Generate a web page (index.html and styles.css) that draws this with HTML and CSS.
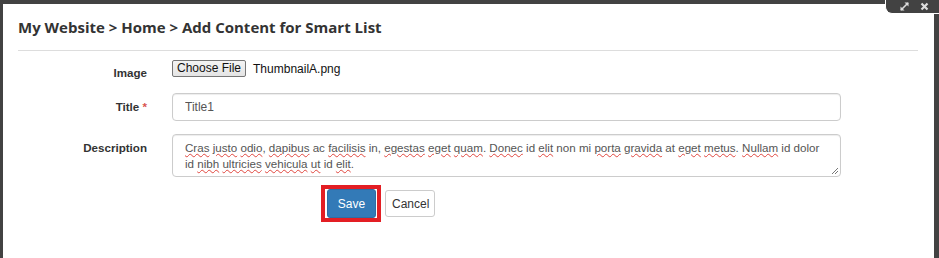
FILE: index.html
```html
<!DOCTYPE html>
<html lang="en">

<head>
  <meta charset="UTF-8">
  <meta name="viewport" content="width=device-width, initial-scale=1.0">
  <title>Add Content for Smart List</title>
  <link rel="stylesheet" href="styles.css">
</head>

<body>
  <div class="modal">
    <div class="modal-header">
      <h1>My Website &gt; Home &gt; Add Content for Smart List</h1>
    </div>

    <form class="form-body">
      <div class="form-row row-file">
        <label class="control-label">Image</label>
        <div class="field file-field">
          <button type="button" class="file-btn">Choose File</button>
          <span class="file-name">ThumbnailA.png</span>
        </div>
      </div>

      <div class="form-row row-title">
        <label class="control-label">Title <span class="required">*</span></label>
        <div class="field">
          <input type="text" class="form-control" value="Title1">
        </div>
      </div>

      <div class="form-row row-desc">
        <label class="control-label">Description</label>
        <div class="field">
          <div class="form-control textarea">
            <span class="typo">Cras</span> <span class="typo">justo</span> <span class="typo">odio</span>, <span class="typo">dapibus</span> ac <span class="typo">facilisis</span> in, <span class="typo">egestas</span> <span class="typo">eget</span> <span class="typo">quam</span>. <span class="typo">Donec</span> id <span class="typo">elit</span> non mi <span class="typo">porta</span> <span class="typo">gravida</span> at <span class="typo">eget</span> <span class="typo">metus</span>. <span class="typo">Nullam</span> id dolor<br>
            id <span class="typo">nibh</span> <span class="typo">ultricies</span> <span class="typo">vehicula</span> <span class="typo">ut</span> id <span class="typo">elit</span>.
            <svg class="grip" width="8" height="8" viewBox="0 0 8 8">
              <path d="M7 1L1 7M7 4L4 7" stroke="#777" stroke-width="1" fill="none" />
            </svg>
          </div>
        </div>
      </div>

      <div class="form-row">
        <div></div>
        <div class="field actions">
          <div class="highlight">
            <button type="submit" class="btn btn-primary">Save</button>
          </div>
          <button type="button" class="btn btn-default">Cancel</button>
        </div>
      </div>
    </form>
  </div>

  <div class="window-tools">
    <svg width="11" height="11" viewBox="0 0 11 11">
      <path d="M2 9L9 2" stroke="#ddd" stroke-width="1.6" />
      <path d="M5.5 1.5H9.5V5.5Z M1.5 5.5V9.5H5.5Z" fill="#ddd" />
    </svg>
    <svg width="9" height="9" viewBox="0 0 9 9">
      <path d="M1.5 1.5L7.5 7.5M7.5 1.5L1.5 7.5" stroke="#ddd" stroke-width="2.2" />
    </svg>
  </div>
</body>

</html>
```

FILE: styles.css
```css
body {
  margin: 0;
  padding: 4px 5px 0 3px;
  background: #424242;
  font-family: 'Liberation Sans', Arial, sans-serif;
  font-size: 12px;
  color: #333;
  height: 258px;
  box-sizing: border-box;
  overflow: hidden;
}

.modal {
  background: #fff;
  height: 254px;
}

.modal-header {
  margin: 0 16px 0 15px;
  padding: 13px 0;
  border-bottom: 1px solid #ddd;
}

h1 {
  margin: 0;
  font-family: 'Open Sans', sans-serif;
  font-size: 15px;
  font-weight: 700;
  line-height: 20px;
  color: #333;
}

.form-body {
  padding: 9px 93px 0 0;
}

.form-row {
  display: grid;
  grid-template-columns: 144px minmax(0, 1fr);
  column-gap: 25px;
  align-items: start;
}

.row-file {
  margin-bottom: 12px;
}

.row-title {
  margin-bottom: 13px;
}

.row-desc {
  margin-bottom: 8px;
}

.control-label {
  text-align: right;
  font-size: 11.6px;
  font-weight: bold;
  line-height: 17px;
  padding-top: 5px;
}

.row-file .control-label {
  padding-top: 4px;
}

.required {
  color: #d9534f;
}

.file-field {
  display: flex;
  align-items: center;
}

.file-btn {
  font-family: 'Liberation Sans', Arial, sans-serif;
  font-size: 12px;
  height: 17px;
  padding: 0 4px;
  margin: 0 7px 0 0;
  background: linear-gradient(#f4f4f4, #e4e4e4);
  border: 1px solid #767676;
  border-radius: 2px;
  color: #111;
  line-height: 15px;
}

.file-name {
  color: #111;
}

.form-control {
  display: block;
  width: 100%;
  box-sizing: border-box;
  border: 1px solid #ccc;
  border-radius: 4px;
  font-family: 'Liberation Sans', Arial, sans-serif;
  font-size: 12px;
  color: #555;
  box-shadow: inset 0 1px 1px rgba(0, 0, 0, 0.075);
}

input.form-control {
  height: 28px;
  padding: 0 12px;
}

.textarea {
  position: relative;
  height: 43px;
  padding: 5px 12px 0;
  font-size: 11.6px;
  line-height: 16px;
  white-space: nowrap;
  overflow: hidden;
}

.typo {
  text-decoration: underline wavy #e0463e;
  text-decoration-thickness: 1px;
  text-underline-offset: 1px;
}

.grip {
  position: absolute;
  right: 1px;
  bottom: 1px;
}

.actions {
  display: flex;
  align-items: center;
  gap: 4px;
  padding-left: 149px;
}

.highlight {
  border: 4px solid #e31e24;
  padding: 0 1px 0 2px;
}

.btn {
  font-family: 'Liberation Sans', Arial, sans-serif;
  font-size: 12px;
  border-radius: 3px;
  border: 1px solid transparent;
  cursor: pointer;
}

.btn-primary {
  display: block;
  width: 49px;
  height: 29px;
  background: #337ab7;
  border-color: #2e6da4;
  color: #fff;
}

.btn-default {
  width: 50px;
  height: 27px;
  background: #fff;
  border-color: #ccc;
  color: #333;
}

.window-tools {
  position: absolute;
  top: -1px;
  left: 885px;
  width: 54px;
  height: 15px;
  box-sizing: border-box;
  background: #424242;
  border: 1px solid #fff;
  border-right: 0;
  border-bottom-left-radius: 7px;
  display: flex;
  align-items: center;
  gap: 10px;
  padding-left: 13px;
}
```
